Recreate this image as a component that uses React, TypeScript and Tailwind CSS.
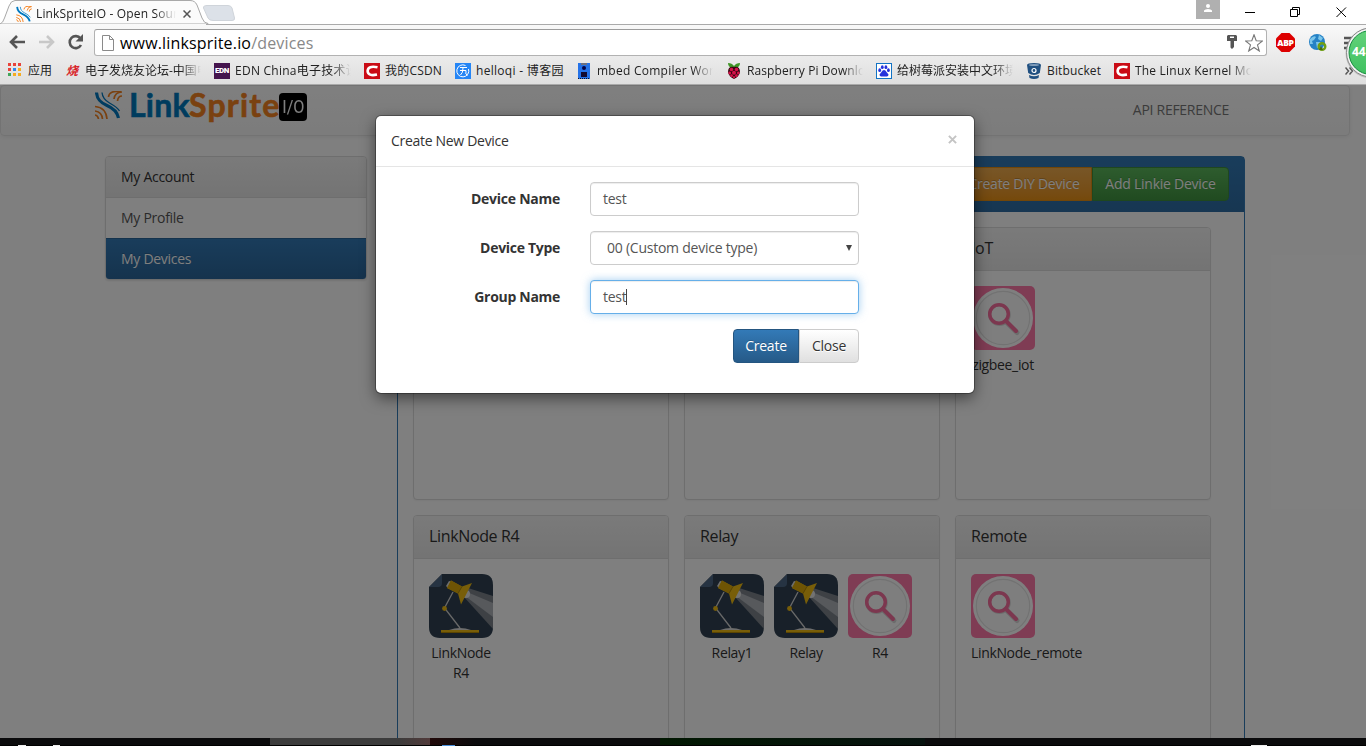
import React from "react";

const UI = "font-['Open_Sans','Noto_Sans_CJK_SC',sans-serif]";

function SpriteMark({ className }: { className: string }) {
  return (
    <svg viewBox="0 0 27 28" className={className} fill="none">
      <path d="M1.500 1.500C2 9 6 12 12 14.500S22 20 23.500 27" stroke="#0078c0" strokeWidth="3.200" />
      <path d="M7 1.500C7.500 7 10 9.500 14.500 12S22.500 16.500 24.500 20" stroke="#0078c0" strokeWidth="1.300" />
      <path d="M27 1Q20 1 19 8M27 5Q23 5 22.500 10M26 .8Q14 -1 13.500 6" stroke="#f58220" strokeWidth="1.700" />
      <path d="M0 15.500Q11 16.500 12 28M0 20Q7 21 7.500 28M0 24Q3 24.500 3.500 28" stroke="#f58220" strokeWidth="1.700" />
    </svg>
  );
}

function LampIcon() {
  return (
    <svg viewBox="0 0 64 64" className="block h-16 w-16">
      <clipPath id="lamp"><path d="M13 0H53Q64 0 64 11V53Q64 64 53 64H11Q0 64 0 53V13Z" /></clipPath>
      <g clipPath="url(#lamp)">
        <rect width="64" height="64" fill="#304152" />
        <path d="M0 13L13 0V9Q13 13 9 13Z" fill="#4c6785" />
        <path d="M39 14L64 22V55L35 23Z" fill="#7c828b" />
        <path d="M38 18L64 29V43L36 22Z" fill="#aeb2b8" />
      </g>
      <circle cx="37" cy="20" r="4" fill="#e6e6e6" />
      <path d="M24 18L15.500 34L31 54" fill="none" stroke="#d2d2d2" strokeWidth="1.300" />
      <path d="M20 7L17 12L20 15L24 8Z" fill="#ddd" />
      <path d="M22 6.500L33 12.500L43 9L32 30.500L29 19.500L18 14Z" fill="#f0bd12" />
      <path d="M22 6.500L33 12.500L29 19.500L18 14Z" fill="#dca908" />
      <path d="M33 12.500L29 19.500" stroke="#8c6a05" strokeWidth=".6" />
      <circle cx="15.500" cy="34.500" r="2.400" fill="#f0bd12" />
      <path d="M20 56Q31 52 42 56Z" fill="#ddd" />
      <path d="M12 56H50V59H12Z" fill="#f0bd12" />
      <path d="M12 58H50V59H12Z" fill="#b78a05" />
    </svg>
  );
}

function SearchIcon() {
  return (
    <svg viewBox="0 0 64 64" className="block h-16 w-16">
      <rect width="64" height="64" rx="5" fill="#ff78a8" />
      <circle cx="32" cy="32" r="30" fill="#fff" />
      <circle cx="32" cy="32" r="26.700" fill="#fdfdfd" stroke="#e4e4e4" strokeWidth="1.200" />
      <circle cx="28.500" cy="28.800" r="9.800" fill="none" stroke="#d9d9d9" strokeWidth="3" />
      <path d="M35 36L46 46.500" stroke="#d9d9d9" strokeWidth="5" strokeLinecap="round" />
      <circle cx="28" cy="28" r="9.300" fill="none" stroke="#f86f9e" strokeWidth="3.500" />
      <path d="M35 35L45 45" stroke="#f86f9e" strokeWidth="4" strokeLinecap="round" />
    </svg>
  );
}

type Device = { name: string; kind: "lamp" | "search" };

function Card({ title, devices }: { title: string; devices: Device[] }) {
  return (
    <div className="h-[273px] w-64 shrink-0 rounded border border-[#ddd] bg-white shadow-[0_1px_2px_rgba(0,0,0,0.05)]">
      <div className="flex h-[43px] items-center rounded-t-[3px] border-b border-[#ddd] bg-linear-to-b from-[#f5f5f5] to-[#e8e8e8] px-[15px] pb-0.5 text-base tracking-[-0.35px] text-[#333]">
        {title}
      </div>
      <div className="flex gap-2.5 px-[15px] pt-[15px]">
        {devices.map((d) => (
          <div key={d.name} className="w-16">
            {d.kind === "lamp" ? <LampIcon /> : <SearchIcon />}
            <div className="mt-[5px] text-center text-sm leading-5 tracking-[-0.34px] text-[#333]">{d.name}</div>
          </div>
        ))}
      </div>
    </div>
  );
}

function Bookmark({ icon, label, box, text }: { icon: React.ReactNode; label: string; box: string; text: string }) {
  return (
    <div className={"flex h-4 shrink-0 items-center gap-[5px] " + box}>
      <div className="flex h-4 w-4 shrink-0 items-center justify-center">{icon}</div>
      <span className={"overflow-hidden whitespace-nowrap leading-4 " + text}>{label}</span>
    </div>
  );
}

const FADE = "w-[116px] [mask-image:linear-gradient(to_right,black_83%,transparent)]";

function CsdnIcon() {
  return (
    <svg viewBox="0 0 16 16" className="h-4 w-4">
      <rect width="16" height="16" fill="#ca0c16" />
      <path d="M13.500 4.300Q4 2.300 3.600 8Q4 13.500 13 11.600" stroke="#fff" strokeWidth="2.600" fill="none" />
    </svg>
  );
}

function Browser() {
  return (
    <header className="relative h-[85px] shrink-0 bg-white">
      <div className="flex h-6 justify-between">
        <div className="relative h-6 w-60">
          <svg viewBox="0 0 240 24" className="absolute inset-0 h-6 w-60">
            <path d="M207 5.500H228Q231 5.500 232 8L234.500 18Q235 20.500 232 20.500H213Q209 20.500 208 18L203.500 8Q203 5.500 207 5.500Z" fill="#dce1e8" stroke="#cfd4da" />
            <path d="M0 24Q3 23 4.500 18L9 6Q11 .5 15 .5H190Q195 .5 197 5L202 18Q204 23.500 208 23.500V24Z" fill="#fbfbfb" stroke="#a8a8a8" />
          </svg>
          <div className="relative flex h-6 items-center pt-[3px] pl-4">
            <SpriteMark className="h-4 w-4" />
            <span className="ml-1 w-[140px] overflow-hidden whitespace-nowrap text-xs leading-4 tracking-[0.15px] text-[#222] [mask-image:linear-gradient(to_right,black_85%,transparent)]">
              LinkSpriteIO - Open Source
            </span>
            <svg viewBox="0 0 8 8" className="ml-[7px] h-2 w-2" stroke="#555" strokeWidth="1.500"><path d="M.5 .5L7.500 7.500M7.500 .5L.5 7.500" /></svg>
          </div>
        </div>
        <div className="flex">
          <div className="flex h-[19px] w-6 justify-center bg-[#b0b0b0] pt-1">
            <svg viewBox="0 0 10 8" className="h-2 w-2.5" fill="#fff"><circle cx="5" cy="2" r="2" /><path d="M1 8V6.500Q2 5 5 5T9 6.500V8Z" /></svg>
          </div>
          <svg viewBox="0 0 146 24" className="h-6 w-[146px]" fill="none" stroke="#000" strokeWidth="1">
            <path d="M25 12.500H35M70.500 9.500H77.500V16.500H70.500ZM72.500 9.500V7.500H79.500V14.500H77.500M116.500 7.500L126 17M126 7.500L116.500 17" />
          </svg>
        </div>
      </div>
      <div className="flex h-[61px] flex-col border-b border-[#a9a9a9] bg-linear-to-b from-[#f9f9f9] to-[#dfdfdf]">
        <div className="ml-[206px] h-px shrink-0 bg-[#aaa]" />
        <div className="flex h-[35px] shrink-0 items-center">
          <svg viewBox="0 0 84 20" className="mb-px ml-2 h-5 w-[84px] shrink-0" fill="none">
            <path d="M17 10H3M9 4L3 10L9 16" stroke="#555" strokeWidth="2.600" />
            <path d="M31 10H45M39 4L45 10L39 16" stroke="#c8c8c8" strokeWidth="2.600" />
            <path d="M72.500 6.500A6 6 0 1 0 73 13" stroke="#555" strokeWidth="2.600" />
            <path d="M75 2V9.500H67.500Z" fill="#555" />
          </svg>
          <div className="ml-0.5 flex h-[27px] w-[1173px] shrink-0 items-center rounded-[3px] border border-[#b2b2b2] border-t-[#9c9c9c] bg-white">
            <svg viewBox="0 0 12 16" className="ml-[7px] h-4 w-3" fill="#fff" stroke="#8a8a8a"><path d="M.5 .5H7.500L11.500 4.500V15.500H.5ZM7.500 .5V4.500H11.500" /></svg>
            <span className="ml-1.5 text-base tracking-[0.17px] text-[#888]"><span className="text-black">www.linksprite.io</span>/devices</span>
            <svg viewBox="0 0 10 14" className="mb-0.5 ml-auto h-3.5 w-2.5" fill="#555"><path d="M1 0H9L10 1V6H7V12L5 14L3.500 12.500V6H0V1ZM3 1.500V3H7V1.500Z" fillRule="evenodd" /></svg>
            <svg viewBox="0 0 18 18" className="mr-[3px] ml-2 h-[18px] w-[18px]" fill="#fff" stroke="#777" strokeWidth="1.100"><path d="M9 .8L11.200 6.800L17.400 7L12.500 10.900L14.300 17L9 13.500L3.700 17L5.500 10.900L.6 7L6.800 6.800Z" /></svg>
          </div>
          <div className="relative ml-[9px] h-[19px] w-[19px] shrink-0">
            <svg viewBox="0 0 19 19" className="absolute inset-0"><path d="M5.500 0H13.500L19 5.500V13.500L13.500 19H5.500L0 13.500V5.500Z" fill="#d00" /></svg>
            <span className="relative block text-center text-[8.5px] leading-[19px] font-extrabold tracking-[-0.3px] text-white">ABP</span>
          </div>
          <svg viewBox="0 0 18 18" className="ml-3.5 h-[18px] w-[18px] shrink-0">
            <circle cx="8" cy="8" r="8" fill="#2582c6" /><path d="M1 5Q5 1 7 3L5 6L3 7L4 10L1 10ZM10 1L14 4L12 7L9 5ZM7 8L12 8L10 13L8 14Z" fill="#7cc6ea" />
            <circle cx="13" cy="12.500" r="3.300" fill="none" stroke="#6f9e16" strokeWidth="2.400" /><path d="M10 16L12 12L14 16Z" fill="#476d0b" />
          </svg>
          <svg viewBox="0 0 14 14" className="ml-[17px] h-3.5 w-3.5 shrink-0" stroke="#555" strokeWidth="2.500"><path d="M0 2H14M0 7H14M0 12H14" /></svg>
        </div>
        <nav className="flex h-[21px] shrink-0 items-center pt-[1px] pl-1.5 text-xs text-[#222]">
          <Bookmark box="w-[58px]" text="pl-px" label="应用" icon={
            <svg viewBox="0 0 13 13" className="mb-1 h-[13px] w-[13px]">
              <path d="M0 0H3V3H0ZM5 0H8V3H5ZM10 0H13V3H10ZM0 5H3V8H0Z" fill="#e8433a" /><path d="M5 5H8V8H5Z" fill="#2f87ef" />
              <path d="M10 5H13V8H10ZM5 10H8V13H5Z" fill="#f5ac22" /><path d="M0 10H3V13H0Z" fill="#40a65a" /><path d="M10 10H13V13H10Z" fill="#f5ac22" />
            </svg>} />
          <Bookmark box="w-[150px]" text={FADE} label="电子发烧友论坛-中国电子" icon={<span className="text-xs leading-4 font-bold text-[#d8232a] italic">烧</span>} />
          <Bookmark box="w-[150px]" text={FADE + " tracking-[0.25px]"} label="EDN China电子技术设计" icon={<span className="block h-4 w-4 bg-[#45144e] text-center font-['Roboto',sans-serif] text-[8px] leading-[15px] font-black tracking-[-0.4px] text-white">EDN</span>} />
          <Bookmark box="w-[91px]" text="tracking-[0.2px]" label="我的CSDN" icon={<CsdnIcon />} />
          <Bookmark box="w-[121px]" text="tracking-[0.3px]" label="helloqi - 博客园" icon={
            <svg viewBox="0 0 16 16" className="h-4 w-4" fill="none" stroke="#fff"><rect width="16" height="16" fill="#2585f5" stroke="none" /><path d="M10.500 2.500A6 6 0 1 0 13.500 6M5 4.500H12M5 7.500H11Q10 12 12.500 12.500M8 5Q8 10 5.500 12" /></svg>} />
          <Bookmark box="w-[150px]" text={FADE + " tracking-[0.25px]"} label="mbed Compiler Workspace" icon={
            <svg viewBox="0 0 12 16" className="h-4 w-3"><rect width="12" height="16" fill="#2472e8" /><circle cx="6" cy="5" r="2" fill="#050545" /><path d="M3 9H9V14H3Z" fill="#120a30" /><path d="M3 0H9V2H3Z" fill="#6b6f80" /><path d="M0 15.500H12" stroke="#112" strokeDasharray="1 1" /></svg>} />
          <Bookmark box="w-[150px]" text={FADE + " tracking-[0.1px]"} label="Raspberry Pi Downloads" icon={
            <svg viewBox="0 0 14 16" className="h-4 w-3.5"><path d="M1 0Q5 0 7 3Q9 0 13 0Q13 4 9 5H5Q1 4 1 0Z" fill="#3f9526" /><path d="M7 4Q13 3 13 9Q12 14 7 16Q2 14 1 9Q1 3 7 4Z" fill="#3a0612" /><g fill="#d5134a"><circle cx="4.500" cy="6.500" r="1.800" /><circle cx="9.500" cy="6.500" r="1.800" /><circle cx="7" cy="9.700" r="2" /><circle cx="2.700" cy="10" r="1.400" /><circle cx="11.300" cy="10" r="1.400" /><circle cx="4.600" cy="12.700" r="1.400" /><circle cx="9.400" cy="12.700" r="1.400" /><circle cx="7" cy="14.200" r="1.100" /></g></svg>} />
          <Bookmark box="w-[150px]" text={FADE} label="给树莓派安装中文环境教程" icon={
            <svg viewBox="0 0 16 16" className="h-4 w-4"><rect x=".5" y=".5" width="15" height="15" fill="#fff" stroke="#1273c4" /><g fill="#2632dc"><ellipse cx="3.700" cy="7.200" rx="1.400" ry="1.900" /><ellipse cx="6.300" cy="4.200" rx="1.400" ry="1.900" /><ellipse cx="9.900" cy="4.200" rx="1.400" ry="1.900" /><ellipse cx="12.400" cy="7.200" rx="1.400" ry="1.900" /><path d="M8 7Q9.500 7 10.500 9L12.500 11.500Q12.500 14 10 13.500H6Q3.500 14 3.500 11.500L5.500 9Q6.500 7 8 7Z" /></g></svg>} />
          <Bookmark box="w-[88px]" text="tracking-[0.15px]" label="Bitbucket" icon={
            <svg viewBox="0 0 14 16" className="h-4 w-3.5" fill="#205081"><path d="M0 2Q0 0 7 0T14 2L12.800 10Q10 12 7 12T1.200 10ZM2 12Q7 14.500 12 12L11.500 15Q7 17 2.500 15Z" /><ellipse cx="7" cy="2" rx="5" ry="1" fill="#7f9cba" /><circle cx="7" cy="7.500" r="2" fill="none" stroke="#fff" strokeWidth="1.200" /></svg>} />
          <Bookmark box="w-[231px]" text={FADE + " tracking-[0.2px]"} label="The Linux Kernel Module" icon={<CsdnIcon />} />
          <svg viewBox="0 0 8 8" className="h-2 w-2 shrink-0" fill="none" stroke="#555" strokeWidth="1.500"><path d="M.5 .5L3.500 4L.5 7.500M4.500 .5L7.500 4L4.500 7.500" /></svg>
        </nav>
      </div>
    </header>
  );
}

const INPUT = "flex h-[34px] w-[269px] items-center rounded border bg-white px-3 text-sm tracking-[-0.24px] text-[#555]";

function Modal() {
  return (
    <div className="absolute inset-0 bg-black/50 pt-[31px] pl-[376px]">
      <div className="h-[277px] w-[598px] rounded-[5px] bg-white text-sm text-[#333] shadow-[0_5px_15px_rgba(0,0,0,0.5),0_0_0_1px_rgba(0,0,0,0.3)]">
        <div className="flex h-[51px] items-center justify-between border-b border-[#e5e5e5] px-[15px]">
          <span className="tracking-[-0.3px]">Create New Device</span>
          <svg viewBox="0 0 10 10" className="mr-[2px] mb-[3px] h-[9px] w-[9px]" stroke="#c4c4c4" strokeWidth="2.200"><path d="M1 1L9 9M9 1L1 9" /></svg>
        </div>
        <div className="grid grid-cols-[184px_269px] items-center gap-x-[30px] gap-y-[15px] pt-[15px]">
          <label className="text-right font-bold tracking-[-0.25px]">Device Name</label>
          <div className={INPUT + " border-[#ccc] shadow-[inset_0_1px_1px_rgba(0,0,0,0.075)]"}>test</div>
          <label className="text-right font-bold tracking-[-0.3px]">Device Type</label>
          <div className={INPUT + " justify-between border-[#ccc] pr-1.5 pl-4 shadow-[inset_0_1px_1px_rgba(0,0,0,0.075)]"}>
            <span>00 (Custom device type)</span>
            <svg viewBox="0 0 6 6" className="h-1.5 w-1.5" fill="#444"><path d="M0 0H6L3 6Z" /></svg>
          </div>
          <label className="text-right font-bold tracking-[-0.3px]">Group Name</label>
          <div className={INPUT + " border-[#66afe9] shadow-[inset_0_1px_1px_rgba(0,0,0,0.075),0_0_8px_rgba(102,175,233,0.6)]"}>
            test<span className="-ml-px h-4 w-px bg-[#444]" />
          </div>
          <div className="col-start-2 flex justify-end">
            <div className="flex h-[34px] w-[66px] items-center justify-center rounded-l border border-[#245580] bg-linear-to-b from-[#337ab7] to-[#265a88] tracking-[-0.25px] text-white [text-shadow:0_-1px_0_rgba(0,0,0,0.2)]">Create</div>
            <div className="flex h-[34px] w-[60px] items-center justify-center rounded-r border border-[#ccc] bg-linear-to-b from-white to-[#e0e0e0] tracking-[-0.25px] [text-shadow:0_1px_0_#fff]">Close</div>
          </div>
        </div>
      </div>
    </div>
  );
}

function Page() {
  return (
    <main className="relative h-[653px] shrink-0 overflow-hidden bg-white">
      <div className="flex h-[51px] w-[1350px] items-center rounded border border-[#e7e7e7] bg-linear-to-b from-white to-[#f8f8f8] shadow-[0_1px_5px_rgba(0,0,0,0.075)]">
        <SpriteMark className="mb-3 ml-[94px] h-7 w-[27px]" />
        <div className="mb-3 ml-[7px] flex w-[150px] font-['Lato',sans-serif] text-[32px] leading-8 whitespace-nowrap [-webkit-text-stroke:0.6px]">
          <span className="w-[60px] font-bold tracking-[0.2px] text-[#0079bd]">Link</span>
          <span className="font-bold tracking-[1.2px] text-[#f58220]">Sprite</span>
        </div>
        <div className="mb-[7px] flex h-7 w-7 items-center justify-center rounded bg-black font-['Roboto',sans-serif] text-lg leading-6 text-white">
          <span className="scale-x-90">I/O</span>
        </div>
        <span className="mr-[120px] mb-[2px] ml-auto text-sm tracking-[-0.28px] text-[#777]">API REFERENCE</span>
      </div>
      <div className="flex items-start gap-[30px] pt-5 pl-[105px]">
        <aside className="h-[124px] w-[262px] shrink-0 overflow-hidden rounded border border-[#ddd] text-sm tracking-[-0.28px] text-[#333] shadow-[0_1px_2px_rgba(0,0,0,0.1)]">
          <div className="flex h-[41px] items-center border-b border-[#ddd] bg-linear-to-b from-[#f5f5f5] to-[#e8e8e8] px-[15px]">My Account</div>
          <div className="flex h-10 items-center px-[15px] text-[#555]">My Profile</div>
          <div className="flex h-[42px] items-center border-t border-[#2b669a] bg-linear-to-b from-[#337ab7] to-[#2b669a] px-[15px] pb-0.5 text-white [text-shadow:0_-1px_0_#286090]">My Devices</div>
        </aside>
        <section className="h-[700px] w-[848px] rounded border border-[#337ab7]">
          <div className="flex h-[55px] justify-end bg-linear-to-b from-[#337ab7] to-[#2e6da4] pt-2.5 pr-[15px] text-sm tracking-[-0.25px] text-white [text-shadow:0_-1px_0_rgba(0,0,0,0.2)]">
            <div className="flex h-[34px] w-[137px] items-center justify-center rounded-l border border-[#e38d13] bg-linear-to-b from-[#f0ad4e] to-[#eb9316] pl-px">Create DIY Device</div>
            <div className="flex h-[34px] w-[137px] items-center justify-center rounded-r border border-[#3e8f3e] bg-linear-to-b from-[#5cb85c] to-[#419641]">Add Linkie Device</div>
          </div>
          <div className="flex flex-wrap gap-[15px] py-[15px] pl-[15px]">
            <Card title="" devices={[]} />
            <Card title="" devices={[]} />
            <Card title="IoT" devices={[{ name: "zigbee_iot", kind: "search" }]} />
            <Card title="LinkNode R4" devices={[{ name: "LinkNode R4", kind: "lamp" }]} />
            <Card title="Relay" devices={[{ name: "Relay1", kind: "lamp" }, { name: "Relay", kind: "lamp" }, { name: "R4", kind: "search" }]} />
            <Card title="Remote" devices={[{ name: "LinkNode_remote", kind: "search" }]} />
          </div>
        </section>
      </div>
      <Modal />
    </main>
  );
}

export default function App() {
  return (
    <div className={"relative flex h-[746px] w-[1366px] flex-col overflow-hidden " + UI}>
      <Browser />
      <Page />
      <footer className="flex h-2 bg-[#0b0b0c]">
        <div className="w-[270px]" />
        <div className="w-40 bg-linear-to-r from-[#3c3c3c] from-80% to-[#513a3a]" />
        <div className="w-[230px] bg-linear-to-r from-[#210909] to-[#0b0b0c] to-20%" />
        <div className="w-[265px] bg-linear-to-r from-[#021802] to-[#06120e]" />
      </footer>
      <svg viewBox="0 0 1366 1" className="absolute bottom-0 left-0 h-px w-[1366px]"><path d="M0 0H1366V1H0Z" fill="#000" /><path d="M18 0H26V1H18ZM53 0H60V1H53ZM1251 0H1267V1H1251Z" fill="#eee" /><path d="M442 0H455V1H442Z" fill="#4a90dc" /></svg>
      <svg viewBox="0 0 26 60" className="absolute top-[23px] right-0 h-[60px] w-[26px]">
        <defs><linearGradient id="ball" x2="0" y2="1"><stop stopColor="#63d27a" /><stop offset="1" stopColor="#3fc060" /></linearGradient></defs>
        <circle cx="31" cy="30" r="25.500" fill="#777" opacity=".35" /><circle cx="31" cy="29.500" r="24.500" fill="#f5f5f5" stroke="#888" /><circle cx="31" cy="29.500" r="22" fill="url(#ball)" stroke="#168c3f" />
      </svg>
      <span className="absolute top-11 left-[1352px] text-[12px] leading-4 font-bold text-white">44</span>
    </div>
  );
}
